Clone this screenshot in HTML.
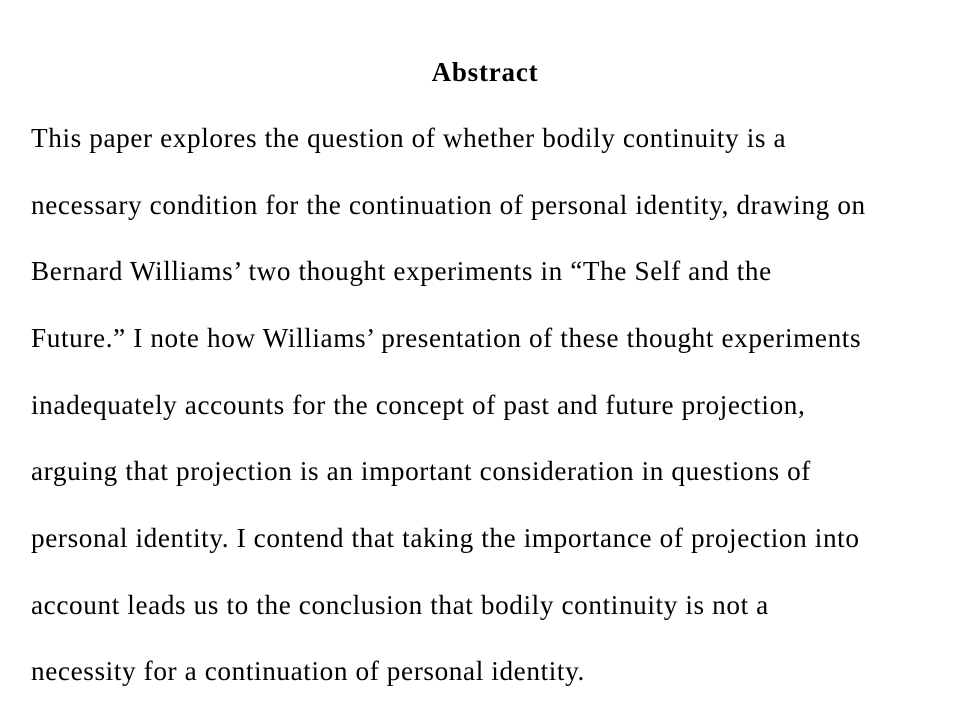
<!DOCTYPE html>
<html><head><meta charset="utf-8"><style>
body{margin:0;background:#fff;width:958px;height:712px;overflow:hidden;position:relative;font-family:"Liberation Serif","Times New Roman",serif;color:#000;}
.l{position:absolute;left:31px;font-size:27.2px;letter-spacing:0.62px;line-height:30px;white-space:nowrap;}
.t{position:absolute;left:0;width:970px;text-align:center;font-weight:bold;font-size:27px;letter-spacing:0.8px;top:57px;line-height:30px;}
</style></head><body>
<div class="t">Abstract</div>
<div class="l" style="top:123px">This paper explores the question of whether bodily continuity is a</div>
<div class="l" style="top:190px">necessary condition for the continuation of personal identity, drawing on</div>
<div class="l" style="top:256px">Bernard Williams’ two thought experiments in “The Self and the</div>
<div class="l" style="top:323px">Future.” I note how Williams’ presentation of these thought experiments</div>
<div class="l" style="top:390px">inadequately accounts for the concept of past and future projection,</div>
<div class="l" style="top:456px">arguing that projection is an important consideration in questions of</div>
<div class="l" style="top:523px">personal identity. I contend that taking the importance of projection into</div>
<div class="l" style="top:590px">account leads us to the conclusion that bodily continuity is not a</div>
<div class="l" style="top:656px">necessity for a continuation of personal identity.</div>
</body></html>
